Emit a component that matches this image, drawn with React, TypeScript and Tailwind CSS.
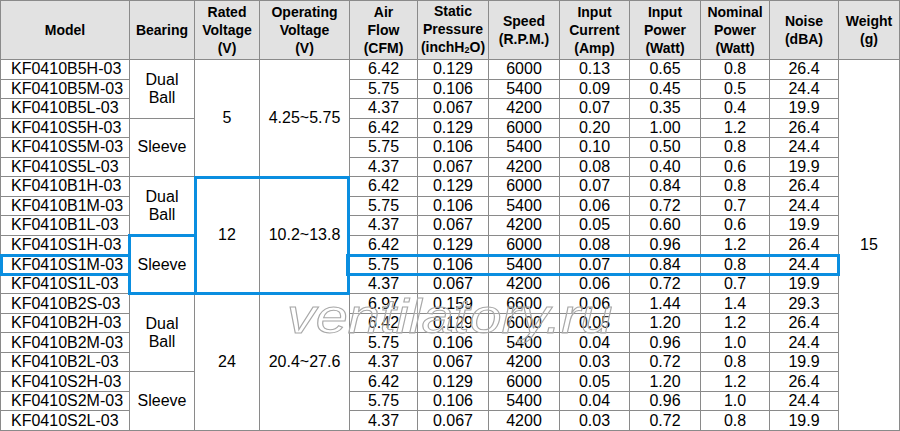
import React from "react";

type Row = [string, string, string, string, string, string, string, string];

const rows: Row[] = [
  ["KF0410B5H-03", "6.42", "0.129", "6000", "0.13", "0.65", "0.8", "26.4"],
  ["KF0410B5M-03", "5.75", "0.106", "5400", "0.09", "0.45", "0.5", "24.4"],
  ["KF0410B5L-03", "4.37", "0.067", "4200", "0.07", "0.35", "0.4", "19.9"],
  ["KF0410S5H-03", "6.42", "0.129", "6000", "0.20", "1.00", "1.2", "26.4"],
  ["KF0410S5M-03", "5.75", "0.106", "5400", "0.10", "0.50", "0.8", "24.4"],
  ["KF0410S5L-03", "4.37", "0.067", "4200", "0.08", "0.40", "0.6", "19.9"],
  ["KF0410B1H-03", "6.42", "0.129", "6000", "0.07", "0.84", "0.8", "26.4"],
  ["KF0410B1M-03", "5.75", "0.106", "5400", "0.06", "0.72", "0.7", "24.4"],
  ["KF0410B1L-03", "4.37", "0.067", "4200", "0.05", "0.60", "0.6", "19.9"],
  ["KF0410S1H-03", "6.42", "0.129", "6000", "0.08", "0.96", "1.2", "26.4"],
  ["KF0410S1M-03", "5.75", "0.106", "5400", "0.07", "0.84", "0.8", "24.4"],
  ["KF0410S1L-03", "4.37", "0.067", "4200", "0.06", "0.72", "0.7", "19.9"],
  ["KF0410B2S-03", "6.97", "0.159", "6600", "0.06", "1.44", "1.4", "29.3"],
  ["KF0410B2H-03", "6.42", "0.129", "6000", "0.05", "1.20", "1.2", "26.4"],
  ["KF0410B2M-03", "5.75", "0.106", "5400", "0.04", "0.96", "1.0", "24.4"],
  ["KF0410B2L-03", "4.37", "0.067", "4200", "0.03", "0.72", "0.8", "19.9"],
  ["KF0410S2H-03", "6.42", "0.129", "6000", "0.05", "1.20", "1.2", "26.4"],
  ["KF0410S2M-03", "5.75", "0.106", "5400", "0.04", "0.96", "1.0", "24.4"],
  ["KF0410S2L-03", "4.37", "0.067", "4200", "0.03", "0.72", "0.8", "19.9"],
];

const bearing: Record<number, { span: string; dual: boolean }> = {
  0: { span: "row-span-3", dual: true },
  3: { span: "row-span-3", dual: false },
  6: { span: "row-span-3", dual: true },
  9: { span: "row-span-3", dual: false },
  12: { span: "row-span-4", dual: true },
  16: { span: "row-span-3", dual: false },
};

const voltage: Record<number, { span: string; rated: string; op: string }> = {
  0: { span: "row-span-6", rated: "5", op: "4.25~5.75" },
  6: { span: "row-span-6", rated: "12", op: "10.2~13.8" },
  12: { span: "row-span-7", rated: "24", op: "20.4~27.6" },
};

const cell = "border-r border-b border-[#8a8a8a] flex items-center justify-center text-center";
const head = `${cell} bg-[#e2e2e2] font-bold text-[14px] leading-[18px]`;

export default function App() {
  return (
    <div className="relative w-[900px] h-[431px] bg-white text-black overflow-hidden" style={{ fontFamily: '"Liberation Sans", Arial, sans-serif' }}>
      <div className="grid h-[431px] w-[900px] border-t border-l border-[#8a8a8a] grid-cols-[129px_65px_65px_90px_68px_71px_71px_70px_71px_69px_69px_61px] grid-rows-[59px_repeat(19,minmax(0,1fr))] text-[16px]">
        <div className={head}>Model</div>
        <div className={head}>Bearing</div>
        <div className={head}>Rated<br />Voltage<br />(V)</div>
        <div className={head}>Operating<br />Voltage<br />(V)</div>
        <div className={head}>Air<br />Flow<br />(CFM)</div>
        <div className={head}>
          <span>
            Static<br />Pressure<br />(inchH<span className="text-[9px] align-[-1px]">2</span>O)
          </span>
        </div>
        <div className={head}>Speed<br />(R.P.M.)</div>
        <div className={head}>Input<br />Current<br />(Amp)</div>
        <div className={head}>Input<br />Power<br />(Watt)</div>
        <div className={head}>Nominal<br />Power<br />(Watt)</div>
        <div className={head}>Noise<br />(dBA)</div>
        <div className={head}>Weight<br />(g)</div>

        {rows.map((r, i) => (
          <React.Fragment key={r[0]}>
            <div className="border-r border-b border-[#8a8a8a] flex items-center pl-[10px] leading-none">{r[0]}</div>
            {bearing[i] && (
              <div className={`${cell} ${bearing[i].span} leading-[18px]`}>
                {bearing[i].dual ? (
                  <span>Dual<br />Ball</span>
                ) : (
                  "Sleeve"
                )}
              </div>
            )}
            {voltage[i] && (
              <>
                <div className={`${cell} ${voltage[i].span}`}>{voltage[i].rated}</div>
                <div className={`${cell} ${voltage[i].span}`}>{voltage[i].op}</div>
              </>
            )}
            {r.slice(1).map((v, j) => (
              <div key={j} className={`${cell} leading-none`}>{v}</div>
            ))}
            {i === 0 && <div className={`${cell} row-span-19`}>15</div>}
          </React.Fragment>
        ))}
      </div>

      {/* highlight boxes */}
      <div className="absolute left-[194px] top-[176px] w-[156px] h-[119px] border-[3px] border-[#0a8ee0] pointer-events-none" />
      <div className="absolute left-[128px] top-[234px] w-[69px] h-[61px] border-[3px] border-[#0a8ee0] pointer-events-none" />
      <div className="absolute left-0 top-[254px] w-[131px] h-[22px] border-[3px] border-[#0a8ee0] pointer-events-none" />
      <div className="absolute left-[346px] top-[254px] w-[494px] h-[22px] border-[3px] border-[#0a8ee0] pointer-events-none" />

      {/* watermark */}
      <div className="absolute left-[287px] top-[293px] origin-left scale-x-[1.2] italic text-[48px] leading-[48px] text-white/20 [-webkit-text-stroke:1px_#a8a8a8] pointer-events-none whitespace-nowrap">
        ventilatory.ru
      </div>
    </div>
  );
}
